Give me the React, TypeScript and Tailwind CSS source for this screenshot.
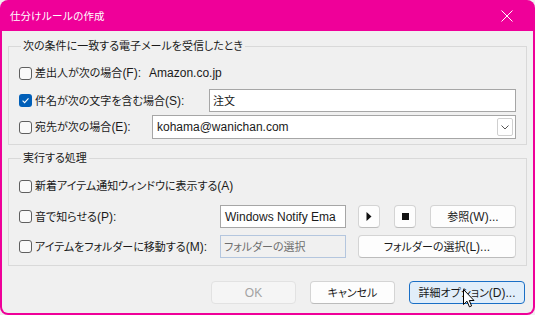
import React from 'react';

// Japanese runs are set a bit smaller than the Latin ones, like Yu Gothic UI next to Segoe UI
const J: React.FC<{ t: string }> = ({ t }) => (
  <>
    {t.split(/([\u3000-\u30ff\u4e00-\u9fff\uff00-\uffef]+)/).map((s, i) =>
      i % 2 === 1 ? (
        <span key={i} className="text-[11px]">
          {s}
        </span>
      ) : (
        <React.Fragment key={i}>{s}</React.Fragment>
      )
    )}
  </>
);

const Check: React.FC<{ on?: boolean }> = ({ on }) =>
  on ? (
    <span className="w-[13px] h-[13px] shrink-0 rounded-[3px] bg-[#005fb8] flex items-center justify-center">
      <svg width="9" height="9" viewBox="0 0 9 9">
        <path d="M1.6 4.7 L3.6 6.6 L7.5 2.4" stroke="white" strokeWidth="1.1" fill="none" />
      </svg>
    </span>
  ) : (
    <span className="w-[13px] h-[13px] shrink-0 rounded-[3px] border border-[#5f5f5f] bg-[#f9f9f9]" />
  );

const Btn: React.FC<{ className?: string; children: React.ReactNode }> = ({ className = '', children }) => (
  <div
    className={`h-[23px] shrink-0 flex items-center justify-center whitespace-nowrap rounded-[4px] border border-[#d4d4d4] border-b-[#bcbcbc] bg-[#fdfdfd] text-[#1b1b1b] ${className}`}
  >
    {children}
  </div>
);

const Row: React.FC<{ className: string; children: React.ReactNode }> = ({ className, children }) => (
  <div className={`flex items-center whitespace-nowrap ${className}`}>{children}</div>
);

const App: React.FC = () => {
  return (
    <div className="w-[535px] h-[315px] bg-[#f0f0f0] font-['Liberation_Sans','Noto_Sans_CJK_JP',sans-serif] [font-feature-settings:'palt'] text-[12px] text-[#1a1a1a] leading-[16px]">
      <div className="relative w-full h-full flex flex-col bg-[#ef0099] rounded-t-[8px] rounded-b-[8px] px-[2px] pb-[2px]">
        {/* title bar */}
        <div className="h-[31px] shrink-0 flex items-center justify-between pl-[8px] pr-[20px] text-white">
          <span className="text-[10.5px] [font-feature-settings:normal]">仕分けルールの作成</span>
          <svg width="12" height="12" viewBox="0 0 12 12">
            <path d="M0.5 0.5 L11.5 11.5 M11.5 0.5 L0.5 11.5" stroke="white" strokeWidth="1" />
          </svg>
        </div>

        {/* body */}
        <div className="flex-1 bg-[#f0f0f0] rounded-b-[6px] px-[6px] pt-[7px] flex flex-col">
          <fieldset className="border border-[#d9d9d9] pl-[10px] pr-[10px] pb-[5px]">
            <legend className="ml-[2px] px-[2px] leading-[16px]">
              <J t="次の条件に一致する電子メールを受信したとき" />
            </legend>
            <Row className="mt-[8px] h-[22px]">
              <Check />
              <span className="ml-[3px]">
                <J t="差出人が次の場合(F):" />
              </span>
              <span className="ml-[8px]">Amazon.co.jp</span>
            </Row>
            <Row className="mt-[5px] h-[23px]">
              <Check on />
              <span className="ml-[3px]">
                <J t="件名が次の文字を含む場合(S):" />
              </span>
              <div className="ml-auto w-[307px] h-[23px] border border-[#a6a6a6] bg-white flex items-center pl-[3px]">
                <J t="注文" />
              </div>
            </Row>
            <Row className="mt-[3px] h-[24px]">
              <Check />
              <span className="ml-[3px]">
                <J t="宛先が次の場合(E):" />
              </span>
              <div className="ml-auto w-[364px] h-[24px] border border-[#a6a6a6] bg-white flex items-center pl-[4px] pr-[2px]">
                <span className="flex-1">kohama@wanichan.com</span>
                <span className="w-[16px] h-[18px] border border-[#cfcfcf] rounded-[2px] bg-white flex items-center justify-center">
                  <svg width="8" height="5" viewBox="0 0 8 5">
                    <path d="M0.5 0.5 L4 4 L7.5 0.5" stroke="#555" strokeWidth="1" fill="none" />
                  </svg>
                </span>
              </div>
            </Row>
          </fieldset>

          <fieldset className="mt-[5px] border border-[#d9d9d9] pl-[10px] pr-[10px] pb-[7px]">
            <legend className="ml-[2px] px-[2px] leading-[16px]">
              <J t="実行する処理" />
            </legend>
            <Row className="mt-[9px] h-[22px]">
              <Check />
              <span className="ml-[3px]">
                <J t="新着アイテム通知ウィンドウに表示する(A)" />
              </span>
            </Row>
            <Row className="mt-[8px] h-[23px]">
              <Check />
              <span className="ml-[3px]">
                <J t="音で知らせる(P):" />
              </span>
              <div className="ml-auto flex items-center">
                <div className="w-[126px] h-[23px] border border-[#a6a6a6] bg-white flex items-center pl-[4px] overflow-hidden whitespace-nowrap">
                  Windows Notify Ema
                </div>
                <Btn className="ml-[12px] w-[22px]">
                  <svg width="6" height="9" viewBox="0 0 6 9">
                    <path d="M0.5 0 L5.5 4.5 L0.5 9 Z" fill="#111" />
                  </svg>
                </Btn>
                <Btn className="ml-[14px] w-[22px]">
                  <span className="w-[7px] h-[7px] bg-[#111]" />
                </Btn>
                <Btn className="ml-[14px] w-[86px]">
                  <J t="参照(W)..." />
                </Btn>
              </div>
            </Row>
            <Row className="mt-[7px] h-[23px]">
              <Check />
              <span className="ml-[3px]">
                <J t="アイテムをフォルダーに移動する(M):" />
              </span>
              <div className="ml-auto flex items-center">
                <div className="w-[126px] h-[23px] border border-[#b4c6de] bg-[#f0f0f0] flex items-center pl-[3px] text-[#6e6e6e]">
                  <J t="フォルダーの選択" />
                </div>
                <Btn className="ml-[12px] w-[158px]">
                  <J t="フォルダーの選択(L)..." />
                </Btn>
              </div>
            </Row>
          </fieldset>

          <div className="mt-[15px] flex justify-end pr-[2px]">
            <div className="w-[85px] h-[23px] flex items-center justify-center rounded-[4px] border border-[#e2e2e2] bg-[#f5f5f5] text-[#a3a3a3]">
              OK
            </div>
            <Btn className="ml-[14px] w-[85px]">
              <J t="キャンセル" />
            </Btn>
            <div className="ml-[14px] w-[116px] h-[23px] flex items-center justify-center whitespace-nowrap rounded-[4px] border border-[#1a6fc6] bg-[#e1eefa]">
              <J t="詳細オプション(D)..." />
            </div>
          </div>
        </div>

        {/* mouse pointer */}
        <svg className="absolute left-[463px] top-[289px]" width="12" height="19" viewBox="0 0 12 19">
          <path d="M0.5 0.5 L0.5 15.5 L4 12.2 L6.4 17.8 L8.6 16.9 L6.3 11.5 L11 11.5 Z" fill="white" stroke="black" strokeWidth="1" strokeLinejoin="round" />
        </svg>
      </div>
    </div>
  );
};

export default App;
